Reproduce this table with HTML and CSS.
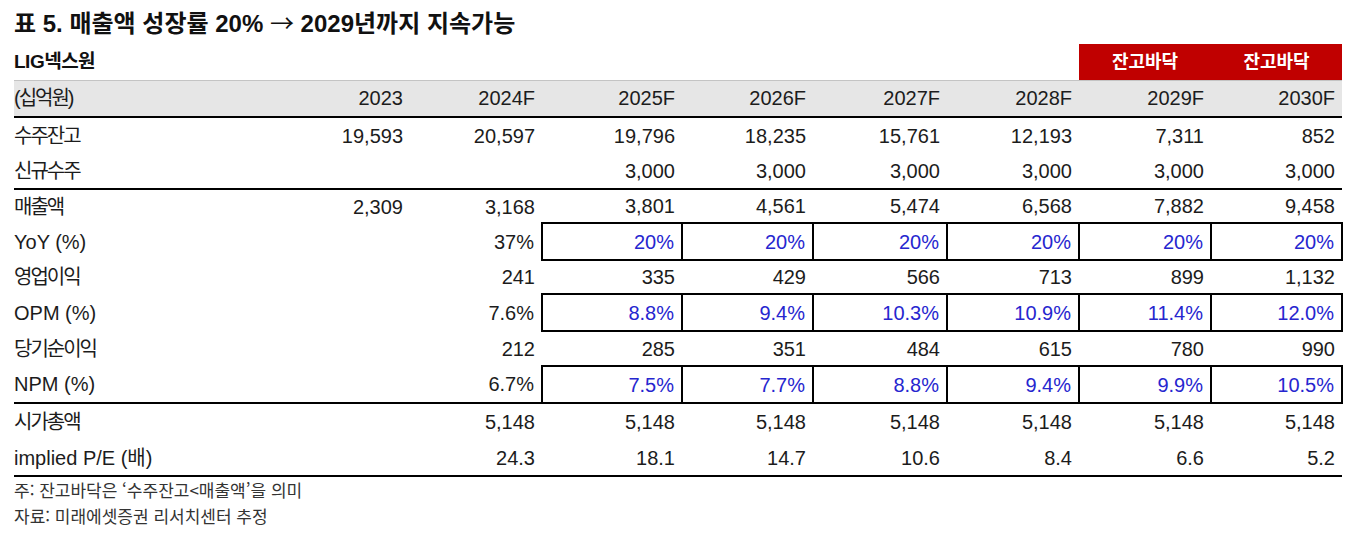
FILE: index.html
```html
<!DOCTYPE html>
<html lang="ko">
<head>
<meta charset="utf-8">
<title>표 5</title>
<link rel="stylesheet" href="styles.css">
</head>
<body>
<div class="wrap">
  <div class="title">표 5. 매출액 성장률 20% <span class="arrow">→</span> 2029년까지 지속가능</div>
  <table class="tbl">
    <colgroup>
      <col class="c-lbl"><col class="c132"><col class="c132"><col class="c140"><col class="c131"><col class="c134"><col class="c132"><col class="c132"><col class="c131">
    </colgroup>
    <tr class="top">
      <td class="lbl co">LIG넥스원</td><td></td><td></td><td></td><td></td><td></td><td></td>
      <td class="red">잔고바닥</td><td class="red">잔고바닥</td>
    </tr>
    <tr class="hd">
      <td class="lbl ko">(십억원)</td><td>2023</td><td>2024F</td><td>2025F</td><td>2026F</td><td>2027F</td><td>2028F</td><td>2029F</td><td>2030F</td>
    </tr>
    <tr class="r36">
      <td class="lbl ko">수주잔고</td><td>19,593</td><td>20,597</td><td>19,796</td><td>18,235</td><td>15,761</td><td>12,193</td><td>7,311</td><td>852</td>
    </tr>
    <tr class="r36 sep">
      <td class="lbl ko">신규수주</td><td></td><td></td><td>3,000</td><td>3,000</td><td>3,000</td><td>3,000</td><td>3,000</td><td>3,000</td>
    </tr>
    <tr class="r34">
      <td class="lbl ko">매출액</td><td>2,309</td><td>3,168</td><td>3,801</td><td>4,561</td><td>5,474</td><td>6,568</td><td>7,882</td><td>9,458</td>
    </tr>
    <tr class="r37">
      <td class="lbl">YoY (%)</td><td></td><td>37%</td><td class="bx">20%</td><td class="bx">20%</td><td class="bx">20%</td><td class="bx">20%</td><td class="bx">20%</td><td class="bx">20%</td>
    </tr>
    <tr class="r34">
      <td class="lbl ko">영업이익</td><td></td><td>241</td><td>335</td><td>429</td><td>566</td><td>713</td><td>899</td><td>1,132</td>
    </tr>
    <tr class="r37">
      <td class="lbl">OPM (%)</td><td></td><td>7.6%</td><td class="bx">8.8%</td><td class="bx">9.4%</td><td class="bx">10.3%</td><td class="bx">10.9%</td><td class="bx">11.4%</td><td class="bx">12.0%</td>
    </tr>
    <tr class="r35">
      <td class="lbl ko">당기순이익</td><td></td><td>212</td><td>285</td><td>351</td><td>484</td><td>615</td><td>780</td><td>990</td>
    </tr>
    <tr class="r37 sep">
      <td class="lbl">NPM (%)</td><td></td><td>6.7%</td><td class="bx">7.5%</td><td class="bx">7.7%</td><td class="bx">8.8%</td><td class="bx">9.4%</td><td class="bx">9.9%</td><td class="bx">10.5%</td>
    </tr>
    <tr class="r37">
      <td class="lbl ko">시가총액</td><td></td><td>5,148</td><td>5,148</td><td>5,148</td><td>5,148</td><td>5,148</td><td>5,148</td><td>5,148</td>
    </tr>
    <tr class="r36 sep">
      <td class="lbl">implied P/E (배)</td><td></td><td>24.3</td><td>18.1</td><td>14.7</td><td>10.6</td><td>8.4</td><td>6.6</td><td>5.2</td>
    </tr>
  </table>
  <div class="notes">
    <p>주: 잔고바닥은 ‘수주잔고&lt;매출액’을 의미</p>
    <p>자료: 미래에셋증권 리서치센터 추정</p>
  </div>
</div>
</body>
</html>
```

FILE: styles.css
```css
html, body {
  margin: 0;
  padding: 0;
  background: #fff;
}
body {
  font-family: "Liberation Sans", "Noto Sans CJK KR", sans-serif;
  color: #1c1c1c;
}
.wrap {
  margin-left: 14px;
  width: 1328px;
}
.title {
  height: 44px;
  line-height: 44px;
  font-size: 24px;
  font-weight: bold;
  color: #111;
  white-space: nowrap;
}
.title .arrow {
  font-family: "Noto Sans CJK KR", sans-serif;
  font-weight: normal;
}
.tbl {
  border-collapse: collapse;
  table-layout: fixed;
  width: 1328px;
  font-size: 20px;
}
.c-lbl { width: 264px; }
.c132 { width: 132px; }
.c140 { width: 140px; }
.c131 { width: 131px; }
.c134 { width: 134px; }
.tbl td {
  padding: 0 7px 0 0;
  text-align: right;
  white-space: nowrap;
  vertical-align: middle;
  line-height: 1;
}
.tbl td.lbl {
  text-align: left;
  padding: 0;
}
.tbl td.ko {
  letter-spacing: -2px;
}
.tbl td.co {
  font-size: 19px;
  font-weight: bold;
  color: #111;
  letter-spacing: -0.5px;
}
.top { height: 36px; }
.tbl td.red {
  background: #c00000;
  color: #fff;
  font-weight: bold;
  font-size: 18px;
  text-align: center;
  padding: 0;
}
.hd { height: 37px; }
.hd td {
  background: #e6e6e6;
  border-top: 1px solid #c4c4c4;
  border-bottom: 2px solid #000;
}
.r34 { height: 34px; }
.r35 { height: 35px; }
.r36 { height: 36px; }
.r37 { height: 37px; }
.sep td {
  border-bottom: 2px solid #000;
}
.tbl td.bx {
  border: 2px solid #000;
  color: #2626cf;
}
.notes {
  font-size: 17px;
  color: #333;
  font-family: "Noto Sans CJK KR", "Liberation Sans", sans-serif;
}
.notes p {
  margin: 0;
  height: 26px;
  line-height: 26px;
}
```
